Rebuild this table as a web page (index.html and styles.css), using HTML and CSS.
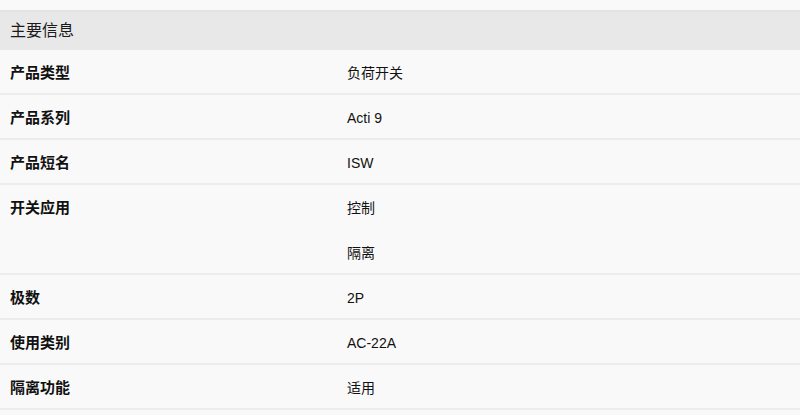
FILE: index.html
```html
<!DOCTYPE html>
<html lang="zh-CN">
<head>
<meta charset="utf-8">
<link rel="stylesheet" href="styles.css">
</head>
<body>
<section class="specs">
  <div class="specs-head">主要信息</div>
  <div class="row"><div class="label">产品类型</div><div class="values"><div class="val">负荷开关</div></div></div>
  <div class="row"><div class="label">产品系列</div><div class="values"><div class="val">Acti 9</div></div></div>
  <div class="row"><div class="label">产品短名</div><div class="values"><div class="val">ISW</div></div></div>
  <div class="row"><div class="label">开关应用</div><div class="values"><div class="val">控制</div><div class="val">隔离</div></div></div>
  <div class="row"><div class="label">极数</div><div class="values"><div class="val">2P</div></div></div>
  <div class="row"><div class="label">使用类别</div><div class="values"><div class="val">AC-22A</div></div></div>
  <div class="row"><div class="label">隔离功能</div><div class="values"><div class="val">适用</div></div></div>
</section>
</body>
</html>
```
FILE: styles.css
```css
html, body {
  margin: 0;
  padding: 0;
  background: #f9f9f9;
}
body {
  font-family: "Liberation Sans", "Noto Sans CJK SC", sans-serif;
  color: #111;
}
.specs {
  padding-top: 10px;
}
.specs-head {
  height: 38px;
  line-height: 38px;
  background: #e8e8e8;
  border-top: 2px solid #e3e3e3;
  padding-left: 10px;
  font-size: 16px;
  color: #1a1a1a;
}
.row {
  display: grid;
  grid-template-columns: 347px 1fr;
  background: linear-gradient(#ececec, #ececec) left bottom / 100% 2px no-repeat;
}
.label {
  padding-left: 10px;
  height: 45px;
  line-height: 46px;
  font-size: 15px;
  font-weight: bold;
}
.values {
  display: flex;
  flex-direction: column;
}
.val {
  height: 45px;
  line-height: 46px;
  font-size: 14px;
}
```
